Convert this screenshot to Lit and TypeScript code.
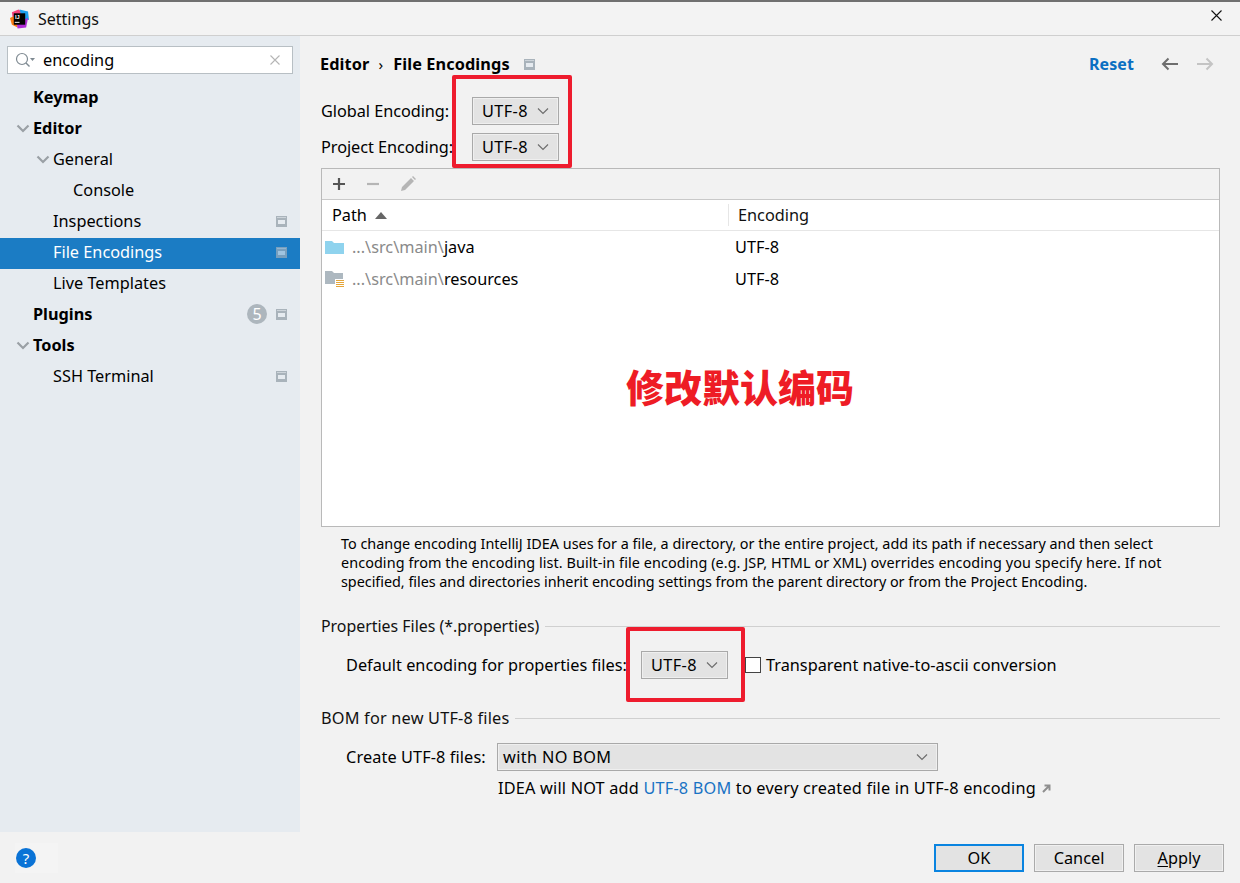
import { LitElement, html, css } from "lit";
import { customElement } from "lit/decorators.js";

const chev = (c = "#6e6e6e") => html`<svg class="chev" width="12" height="8" viewBox="0 0 12 8"><path d="M1 1.5 L6 6.5 L11 1.5" fill="none" stroke=${c} stroke-width="1.2"/></svg>`;
const tri = html`<svg class="tri" width="14" height="9" viewBox="0 0 14 9"><path d="M1.5 1.5 L7 7 L12.5 1.5" fill="none" stroke="#9aa0a5" stroke-width="2.2"/></svg>`;
const proj = html`<svg class="proj" width="11" height="11" viewBox="0 0 11 11"><rect width="11" height="11" fill="#a9b3bb"/><rect x="1" y="1" width="9" height="1" fill="#cdd4da"/><rect x="2" y="4" width="7" height="4" fill="#e6ebf0"/></svg>`;

@customElement("app-root")
export class AppRoot extends LitElement {
  static styles = css`
    :host { display: block; width: 1240px; height: 883px; position: relative; overflow: hidden; background: #f2f2f2; color: #000;
      font-family: "Noto Sans", "Open Sans", sans-serif; font-size: 16.3px; }
    .titlebar { height: 36px; box-sizing: border-box; border-top: 2px solid #707070; border-bottom: 1px solid #cfcfcf; display: flex; align-items: center; padding: 0 18px 0 10px; background: #f3f3f3; }
    .titlebar .t { margin-left: 9px; font-size: 16px; color: #111; flex: 1; }
    .titlebar .x { margin-bottom: 6px; }
    .main { display: flex; height: 796px; }
    .side { width: 300px; background: #e6ebf0; flex: none; padding-top: 10px; box-sizing: border-box; }
    .search { margin: 0 7px; height: 28px; box-sizing: border-box; border: 1px solid #b8bfc4; background: #fff; display: flex; align-items: center; padding: 0 12px 0 7px; }
    .search .q { flex: 1; margin-left: 8px; color: #000; }
    .tree { margin-top: 9px; }
    .row { height: 31px; box-sizing: border-box; padding-bottom: 3px; display: flex; align-items: center; position: relative; color: #000; }
    .row.b { font-weight: 700; }
    .row.l0 { padding-left: 33px; }
    .row.l1 { padding-left: 53px; }
    .row.l2 { padding-left: 73px; }
    .row.sel { background: #1b7cc4; color: #fff; }
    .row.sel .proj { opacity: .65; }
    .row .tri { position: absolute; margin-left: -17px; }
    .row .right { margin-left: auto; margin-right: 13px; display: flex; align-items: center; gap: 9px; }
    .badge { width: 20px; height: 20px; border-radius: 50%; background: #adb6bd; color: #fff; font-size: 16px; font-weight: 400; display: flex; align-items: center; justify-content: center; }
    .content { flex: 1; padding: 0 20px 0 21px; min-width: 0; }
    .hdr { height: 56px; display: flex; align-items: center; font-weight: 700; box-sizing: border-box; margin-left: -1px; letter-spacing: .1px; }
    .hdr .sep { font-weight: 400; margin: 0 10px 0 9px; font-size: 15px; }
    .hdr .proj { margin-left: 14px; }
    .hdr .reset { margin-left: auto; color: #0b6fc2; font-size: 16px; }
    .hdr .nav { margin-left: 27px; display: flex; gap: 17px; margin-right: 6px; }
    .enc { height: 36px; display: flex; align-items: center; }
    .enc .lab { width: 151px; flex: none; white-space: nowrap; letter-spacing: -.05px; }
    .combo { display: inline-flex; align-items: center; height: 28px; box-sizing: border-box; border: 1px solid #a9a9a9; box-shadow: inset 0 0 0 1px #efefef; background: #e3e3e3; padding: 0 9px; width: 87px; justify-content: space-between; color: #000; flex: none; letter-spacing: .4px; }
    .enc1 { margin-top: 1px; }
    .box { margin-top: 3px; height: 359px; box-sizing: border-box; border: 1px solid #b9b9b9; background: #fff; }
    .tools { height: 31px; box-sizing: border-box; background: #f2f2f2; border-bottom: 1px solid #c9c9c9; display: flex; align-items: center; padding-left: 9px; gap: 18px; }
    .thead { height: 31px; display: flex; border-bottom: 1px solid #e6e6e6; align-items: center; box-sizing: border-box; }
    .thead .c1 { width: 407px; box-sizing: border-box; padding-left: 10px; display: flex; align-items: center; gap: 8px; border-right: 1px solid #e6e6e6; height: 22px; }
    .thead .c2 { padding-left: 9px; color: #111; }
    .trow { height: 32px; display: flex; align-items: center; padding-left: 3px; }
    .trow .p { width: 410px; display: flex; align-items: center; gap: 8px; }
    .gr { color: #8a8a8a; }
    .hint { margin: 7px 0 0 20px; font-size: 14.4px; line-height: 19px; color: #000; width: 870px; height: 60px; white-space: nowrap; }
    .hint .l2 { letter-spacing: .08px; }
    .hint .l3 { letter-spacing: -.03px; }
    .sec { display: flex; align-items: center; gap: 6px; height: 24px; color: #111; }
    .sec i { flex: 1; height: 1px; background: #d0d0d0; }
    .s1 { margin-top: 20px; font-size: 15.9px; }
    .s2 { margin-top: 27px; letter-spacing: .2px; }
    .prow { display: flex; align-items: center; margin-left: 25px; height: 28px; }
    .p1 { margin-top: 13px; }
    .p1 .lab { width: 295px; flex: none; }
    .cb { width: 14px; height: 14px; border: 1px solid #444; background: #fff; margin: 0 5px 0 17px; flex: none; }
    .p2 { margin-top: 13px; }
    .p2 .lab { width: 151px; flex: none; letter-spacing: .1px; }
    .wide { width: 441px; padding-left: 5px; letter-spacing: .35px; }
    .note { margin: 3px 0 0 177px; display: flex; align-items: center; height: 28px; white-space: pre; letter-spacing: .19px; }
    .note a { color: #1a73c4; }
    .note svg { margin-left: 6px; }
    .footer { height: 51px; display: flex; align-items: center; justify-content: flex-end; padding: 0 16px; gap: 10px; position: relative; box-sizing: border-box; }
    .helpwrap { position: absolute; left: 15px; top: 11px; width: 43px; height: 30px; background: #f4f4f4; display: flex; align-items: center; padding-left: 1px; box-sizing: border-box; }
    .help { width: 20px; height: 20px; border-radius: 50%; background: #0a73d6; color: #fff; display: flex; align-items: center; justify-content: center; font-size: 15px; }
    .btn { width: 90px; height: 28px; box-sizing: border-box; border: 1px solid #aaa; box-shadow: inset 0 0 0 1px #f0f0f0; background: #e3e3e3; display: flex; align-items: center; justify-content: center; color: #000; }
    .btn.ok { border: 2px solid #0a84e0; box-shadow: none; }
    u { text-underline-offset: 2px; }
    .red { position: absolute; box-sizing: border-box; border: 4px solid #ee1c2e; border-radius: 2px; pointer-events: none; }
    .r1 { left: 452px; top: 75px; width: 120px; height: 93px; }
    .r2 { left: 626px; top: 627px; width: 119px; height: 75px; }
    .cn { position: absolute; left: 626px; top: 360px; font-family: "Noto Sans CJK SC", sans-serif; font-weight: 900; font-size: 38px; line-height: 52px; color: #ee1c25; white-space: nowrap; }
  `;

  render() {
    return html`
      <div class="titlebar">
        <svg width="19" height="20" viewBox="0 0 20 20"><path d="M2 3 L9 0 L13 3 L10 10 L3 11Z" fill="#f5427b"/><path d="M10 0 L19 2 L20 11 L13 10Z" fill="#1d9ff0"/><path d="M0 9 L6 6 L8 19 L2 16Z" fill="#f97a12"/><path d="M7 14 L19 9 L17 19 L8 20Z" fill="#b02cd6"/><rect x="4" y="4" width="12" height="12" fill="#000"/><text x="5.2" y="10.5" font-size="6" fill="#fff" font-weight="700" font-family="Liberation Sans">IJ</text><rect x="5" y="13" width="5" height="1" fill="#fff"/></svg>
        <span class="t">Settings</span>
        <svg class="x" width="11" height="11" viewBox="0 0 11 11"><path d="M.5 .5 L10.5 10.5 M10.5 .5 L.5 10.5" stroke="#111" stroke-width="1.1"/></svg>
      </div>
      <div class="main">
        <div class="side">
          <div class="search">
            <svg width="20" height="16" viewBox="0 0 20 16"><circle cx="7" cy="7" r="5.5" fill="none" stroke="#7f8a92" stroke-width="1.2"/><path d="M11 11 L14.5 14.5" stroke="#7f8a92" stroke-width="1.4"/><path d="M15 6 L20 6 L17.5 9Z" fill="#7f8a92"/></svg>
            <span class="q">encoding</span>
            <svg width="10" height="10" viewBox="0 0 10 10"><path d="M.5 .5 L9.5 9.5 M9.5 .5 L.5 9.5" stroke="#b5b5b5" stroke-width="1.1"/></svg>
          </div>
          <div class="tree">
            <div class="row b l0">Keymap</div>
            <div class="row b l0">${tri}Editor</div>
            <div class="row l1">${tri}General</div>
            <div class="row l2">Console</div>
            <div class="row l1">Inspections<span class="right">${proj}</span></div>
            <div class="row l1 sel">File Encodings<span class="right">${proj}</span></div>
            <div class="row l1">Live Templates</div>
            <div class="row b l0">Plugins<span class="right"><span class="badge">5</span>${proj}</span></div>
            <div class="row b l0">${tri}Tools</div>
            <div class="row l1">SSH Terminal<span class="right">${proj}</span></div>
          </div>
        </div>
        <div class="content">
          <div class="hdr">
            <span>Editor</span><span class="sep">›</span><span>File Encodings</span>${proj}
            <span class="reset">Reset</span>
            <span class="nav">
              <svg width="18" height="14" viewBox="0 0 18 14"><path d="M17 7 H2 M7.5 1.5 L2 7 L7.5 12.5" fill="none" stroke="#6e6e6e" stroke-width="2"/></svg>
              <svg width="18" height="14" viewBox="0 0 18 14"><path d="M1 7 H16 M10.5 1.5 L16 7 L10.5 12.5" fill="none" stroke="#c4c4c4" stroke-width="2"/></svg>
            </span>
          </div>
          <div class="enc enc1"><span class="lab">Global Encoding:</span><span class="combo">UTF-8 ${chev()}</span></div>
          <div class="enc"><span class="lab">Project Encoding:</span><span class="combo">UTF-8 ${chev()}</span></div>
          <div class="box">
            <div class="tools">
              <svg width="16" height="16" viewBox="0 0 16 16"><path d="M8 2 V14 M2 8 H14" stroke="#555" stroke-width="2.2"/></svg>
              <svg width="16" height="16" viewBox="0 0 16 16"><path d="M2 8 H14" stroke="#b5b5b5" stroke-width="2.2"/></svg>
              <svg width="18" height="18" viewBox="0 0 18 18"><path d="M2 16 L3 12 L12 3 L15 6 L6 15Z M13 2 L14 1 L17 4 L16 5Z" fill="#b5b5b5"/></svg>
            </div>
            <div class="thead">
              <div class="c1">Path <svg width="12" height="7" viewBox="0 0 12 7"><path d="M0 7 L6 0 L12 7Z" fill="#666"/></svg></div>
              <div class="c2">Encoding</div>
            </div>
            <div class="trow"><span class="p">
              <svg width="19" height="15" viewBox="0 0 19 15"><path d="M0 1 H7 L9 3 H19 V14 H0Z" fill="#8fd3ee"/></svg>
              <span><span class="gr">...\\src\\main\\</span>java</span></span><span>UTF-8</span></div>
            <div class="trow"><span class="p">
              <svg width="19" height="18" viewBox="0 0 19 18"><path d="M0 1 H7 L9 3 H18 V14 H0Z" fill="#adb8c0"/><rect x="10" y="9" width="9" height="9" fill="#fff"/><path d="M11 10.5 H19 M11 12.5 H19 M11 14.5 H19 M11 16.5 H19" stroke="#e5a63a" stroke-width="1"/></svg>
              <span><span class="gr">...\\src\\main\\</span>resources</span></span><span>UTF-8</span></div>
          </div>
          <div class="hint">To change encoding IntelliJ IDEA uses for a file, a directory, or the entire project, add its path if necessary and then select<br><span class="l2">encoding from the encoding list. Built-in file encoding (e.g. JSP, HTML or XML) overrides encoding you specify here. If not</span><br><span class="l3">specified, files and directories inherit encoding settings from the parent directory or from the Project Encoding.</span></div>
          <div class="sec s1">Properties Files (*.properties)<i></i></div>
          <div class="prow p1"><span class="lab">Default encoding for properties files:</span><span class="combo">UTF-8 ${chev()}</span><span class="cb"></span><span>Transparent native-to-ascii conversion</span></div>
          <div class="sec s2">BOM for new UTF-8 files<i></i></div>
          <div class="prow p2"><span class="lab">Create UTF-8 files:</span><span class="combo wide">with NO BOM ${chev()}</span></div>
          <div class="note">IDEA will NOT add <a>UTF-8 BOM</a> to every created file in UTF-8 encoding<svg width="9" height="9" viewBox="0 0 9 9"><path d="M1 8 L7 2 M2.5 1.5 H7.5 V6.5" fill="none" stroke="#8f8f8f" stroke-width="2"/></svg></div>
        </div>
      </div>
      <div class="footer">
        <span class="helpwrap"><span class="help">?</span></span>
        <span class="btn ok">OK</span>
        <span class="btn">Cancel</span>
        <span class="btn"><span><u>A</u>pply</span></span>
      </div>
      <div class="red r1"></div>
      <div class="red r2"></div>
      <div class="cn">修改默认编码</div>
    `;
  }
}
